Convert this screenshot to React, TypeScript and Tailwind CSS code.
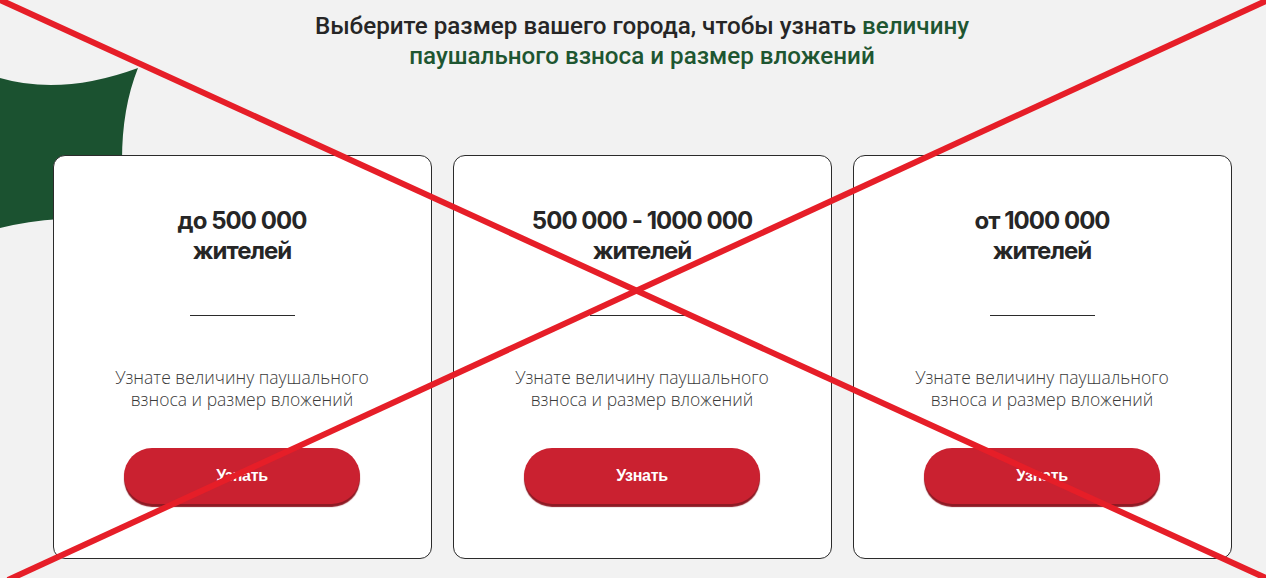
import React from "react";

type Tier = { title: string; sub: string };

const tiers: Tier[] = [
  { title: "до 500 000", sub: "жителей" },
  { title: "500 000 - 1000 000", sub: "жителей" },
  { title: "от 1000 000", sub: "жителей" },
];

function TierCard({ tier }: { tier: Tier }) {
  return (
    <div className="relative z-10 w-[379px] h-[404px] bg-white border border-[#2b2b2b] rounded-[12px] flex flex-col items-center pt-[50px]">
      <h3
        className="text-[24px] leading-[30px] font-bold text-[#262626] tracking-[-0.04em] text-center"
        style={{ fontFamily: "Inter, 'Noto Sans', sans-serif" }}
      >
        {tier.title}
        <br />
        {tier.sub}
      </h3>
      <div className="mt-[49px] w-[105px] h-px bg-[#2b2b2b]" />
      <p
        className="mt-[50px] text-[17.5px] leading-[22px] font-light text-[#3a3a3a] text-center"
        style={{ fontFamily: "'Open Sans', Lato, sans-serif" }}
      >
        Узнате величину паушального
        <br />
        взноса и размер вложений
      </p>
      <button
        className="mt-[38px] w-[236px] h-[56px] rounded-full bg-[#ca2130] text-white text-[16px] font-bold shadow-[0_3px_1px_#8e1a24] tracking-[-0.02em]"
        style={{ fontFamily: "'Liberation Sans', Arial, sans-serif" }}
      >
        Узнать
      </button>
    </div>
  );
}

export default function App() {
  return (
    <div className="relative w-[1266px] h-[578px] overflow-hidden bg-[#f2f2f2]">
      {/* decorative green blob on the left */}
      <svg className="absolute left-0 top-0" width="160" height="240" viewBox="0 0 160 240">
        <path
          d="M0 78 Q 62 96 138 68 Q 122 108 122 160 L 122 222 L 60 219 Q 28 221 0 228 Z"
          fill="#1b5230"
        />
      </svg>

      <div className="relative flex flex-col items-center pt-[11px] pl-[18px]">
        <h2
          className="text-[24.2px] leading-[30px] font-medium text-[#262626] text-center"
          style={{ fontFamily: "Roboto, 'Noto Sans', sans-serif" }}
        >
          Выберите размер вашего города, чтобы узнать{" "}
          <span className="text-[#1e5631]">величину</span>
          <br />
          <span className="text-[#1e5631]">паушального взноса и размер вложений</span>
        </h2>

        <div className="mt-[84px] flex justify-center gap-[21px]">
          {tiers.map((t) => (
            <TierCard key={t.title} tier={t} />
          ))}
        </div>
      </div>

      {/* red cross drawn over the page */}
      <svg
        className="absolute inset-0 z-20 pointer-events-none"
        width="1266"
        height="578"
        viewBox="0 0 1266 578"
      >
        <line x1="-4" y1="-2" x2="1270" y2="580" stroke="#e61e28" strokeWidth="6" />
        <line x1="8" y1="580" x2="1270" y2="-1" stroke="#e61e28" strokeWidth="6" />
      </svg>
    </div>
  );
}
